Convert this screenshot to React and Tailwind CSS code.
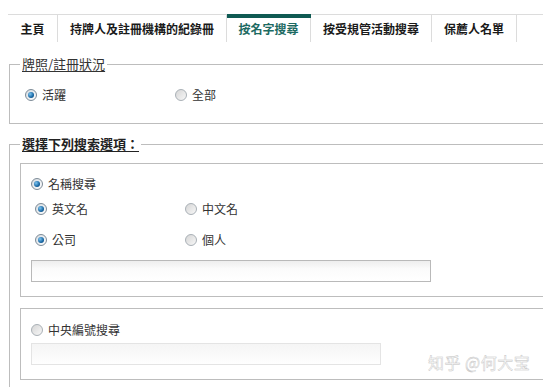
import React from "react";

const font = { fontFamily: '"Noto Sans CJK TC", "Noto Sans CJK SC", sans-serif' };

function Radio({ checked }) {
  return (
    <span
      className={
        "w-[12px] h-[12px] rounded-full border flex items-center justify-center shrink-0 " +
        (checked
          ? "border-[#7d8b97] bg-[linear-gradient(135deg,#d4dbe1,#ffffff)]"
          : "border-[#a9b0b6] bg-[linear-gradient(135deg,#d6d6d6,#f7f7f7)]")
      }
    >
      {checked && (
        <span className="w-[6px] h-[6px] rounded-full bg-[radial-gradient(circle_at_35%_35%,#7cc4f0,#1766a3_60%,#0b3d66)]" />
      )}
    </span>
  );
}

function Option({ checked, label, className = "" }) {
  return (
    <div className={"flex items-center gap-[5px] h-[16px] " + className}>
      <Radio checked={checked} />
      <span className="text-[12px] leading-[16px] text-[#333]">{label}</span>
    </div>
  );
}

function Tab({ label, w, active }) {
  return (
    <div
      className={
        "relative h-full flex items-center justify-center border-r border-[#dcdcdc] text-[12px] font-bold " +
        w +
        (active ? " text-[#1c6a62]" : " text-[#1a1a1a]")
      }
    >
      {active && <div className="absolute left-0 right-[-1px] top-[-1px] h-[4px] bg-[#0f5a53]" />}
      <span className="pt-[1px]">{label}</span>
    </div>
  );
}

export default function App() {
  return (
    <div className="relative w-[543px] h-[387px] overflow-hidden bg-white" style={font}>
      <div className="mt-[14px] ml-[8px] h-[28px] border-t border-[#dcdcdc] flex">
        <Tab label="主頁" w="w-[50px]" />
        <Tab label="持牌人及註冊機構的紀錄冊" w="w-[169px]" />
        <Tab label="按名字搜尋" w="w-[84px]" active />
        <Tab label="按受規管活動搜尋" w="w-[121px]" />
        <Tab label="保薦人名單" w="w-[85px]" />
      </div>

      <fieldset className="mt-[14px] ml-[9px] mr-[-20px] border border-[#bdbdbd] px-[10px] pt-[15px] pb-[20px]">
        <legend className="px-[2px] text-[13px] leading-[16px] text-[#333] underline underline-offset-2">
          牌照/註冊狀況
        </legend>
        <div className="flex ml-[5px]">
          <Option checked label="活躍" className="w-[150px]" />
          <Option label="全部" />
        </div>
      </fieldset>

      <fieldset className="mt-[12px] ml-[9px] mr-[-20px] border border-[#bdbdbd] pl-[10px] pr-0 pt-[11px] pb-[40px]">
        <legend className="px-[2px] text-[13px] leading-[16px] font-bold text-[#222] underline underline-offset-2">
          選擇下列搜索選項：
        </legend>

        <div className="border border-[#bdbdbd] pl-[10px] pt-[12px] pb-[14px]">
          <Option checked label="名稱搜尋" />
          <div className="flex ml-[4px] mt-[9px]">
            <Option checked label="英文名" className="w-[150px]" />
            <Option label="中文名" />
          </div>
          <div className="flex ml-[4px] mt-[15px]">
            <Option checked label="公司" className="w-[150px]" />
            <Option label="個人" />
          </div>
          <div className="mt-[12px] w-[400px] h-[22px] border border-[#b9b9b9] bg-[linear-gradient(180deg,#eeeeee,#fbfbfb_40%,#ffffff)]" />
        </div>

        <div className="mt-[11px] border border-[#bdbdbd] pl-[10px] pt-[13px] pb-[14px]">
          <Option label="中央編號搜尋" />
          <div className="mt-[5px] w-[350px] h-[22px] border border-[#e4e4e4] bg-[linear-gradient(180deg,#f5f5f5,#fefefe)]" />
        </div>
      </fieldset>

      <div
        className="absolute left-[428px] top-[352px] text-[16px] leading-[20px] text-[#fafafa] tracking-[0.5px]"
        style={{ WebkitTextStroke: "0.4px #c2c2c2" }}
      >
        知乎 @何大宝
      </div>
    </div>
  );
}
